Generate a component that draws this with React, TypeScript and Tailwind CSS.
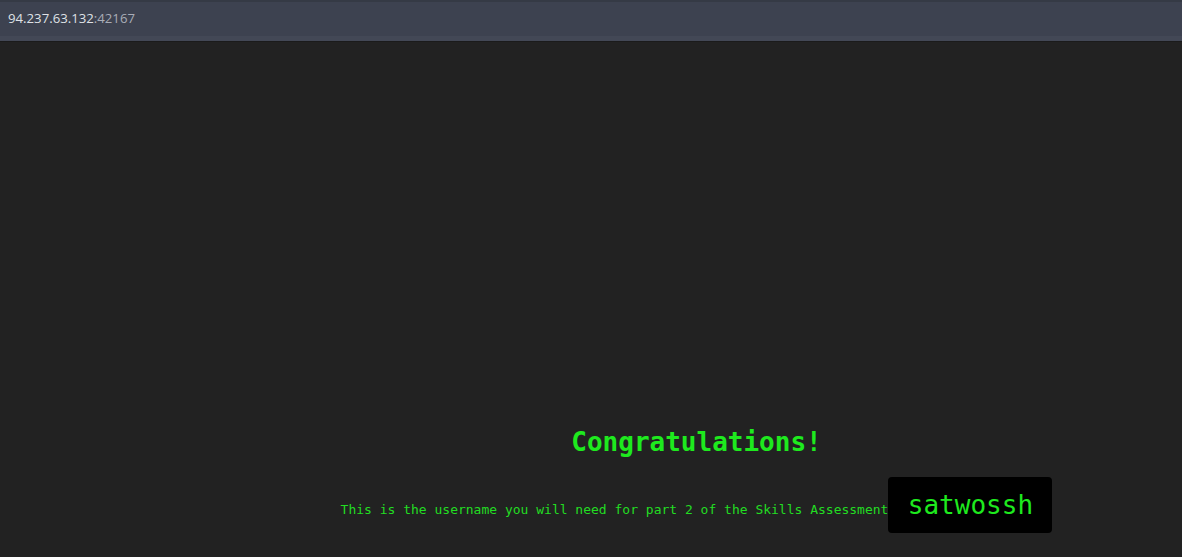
export default function App() {
  return (
    <div className="h-[557px] bg-[#222222] flex flex-col overflow-hidden">
      <div className="h-[42px] shrink-0 flex flex-col">
        <div className="h-[2px] bg-[#353a45]" />
        <div className="flex-1 bg-[#3d4250] flex items-center px-[8px]">
          <span className="text-[13.2px] font-['Open_Sans',sans-serif] text-[#dfe1e6]">
            94.237.63.132<span className="text-[#a9adb7]">:42167</span>
          </span>
        </div>
        <div className="h-[5px] bg-[#434856]" />
        <div className="h-[1px] bg-[#1b1b1b]" />
      </div>
      <div className="flex-1 pl-[211px] pt-[385px] text-center font-['DejaVu_Sans_Mono',monospace] text-[#1eea1e]">
        <h1 className="text-[26px] leading-[30px] font-bold">Congratulations!</h1>
        <p className="mt-[20px] text-[13px] text-[#22dd22]">
          This is the username you will need for part 2 of the Skills Assessment
          <span className="inline-block align-baseline bg-black rounded-[4px] w-[164px] py-[11px] text-[26px] leading-[34px] text-[#1eea1e]">
            satwossh
          </span>
        </p>
      </div>
    </div>
  );
}
